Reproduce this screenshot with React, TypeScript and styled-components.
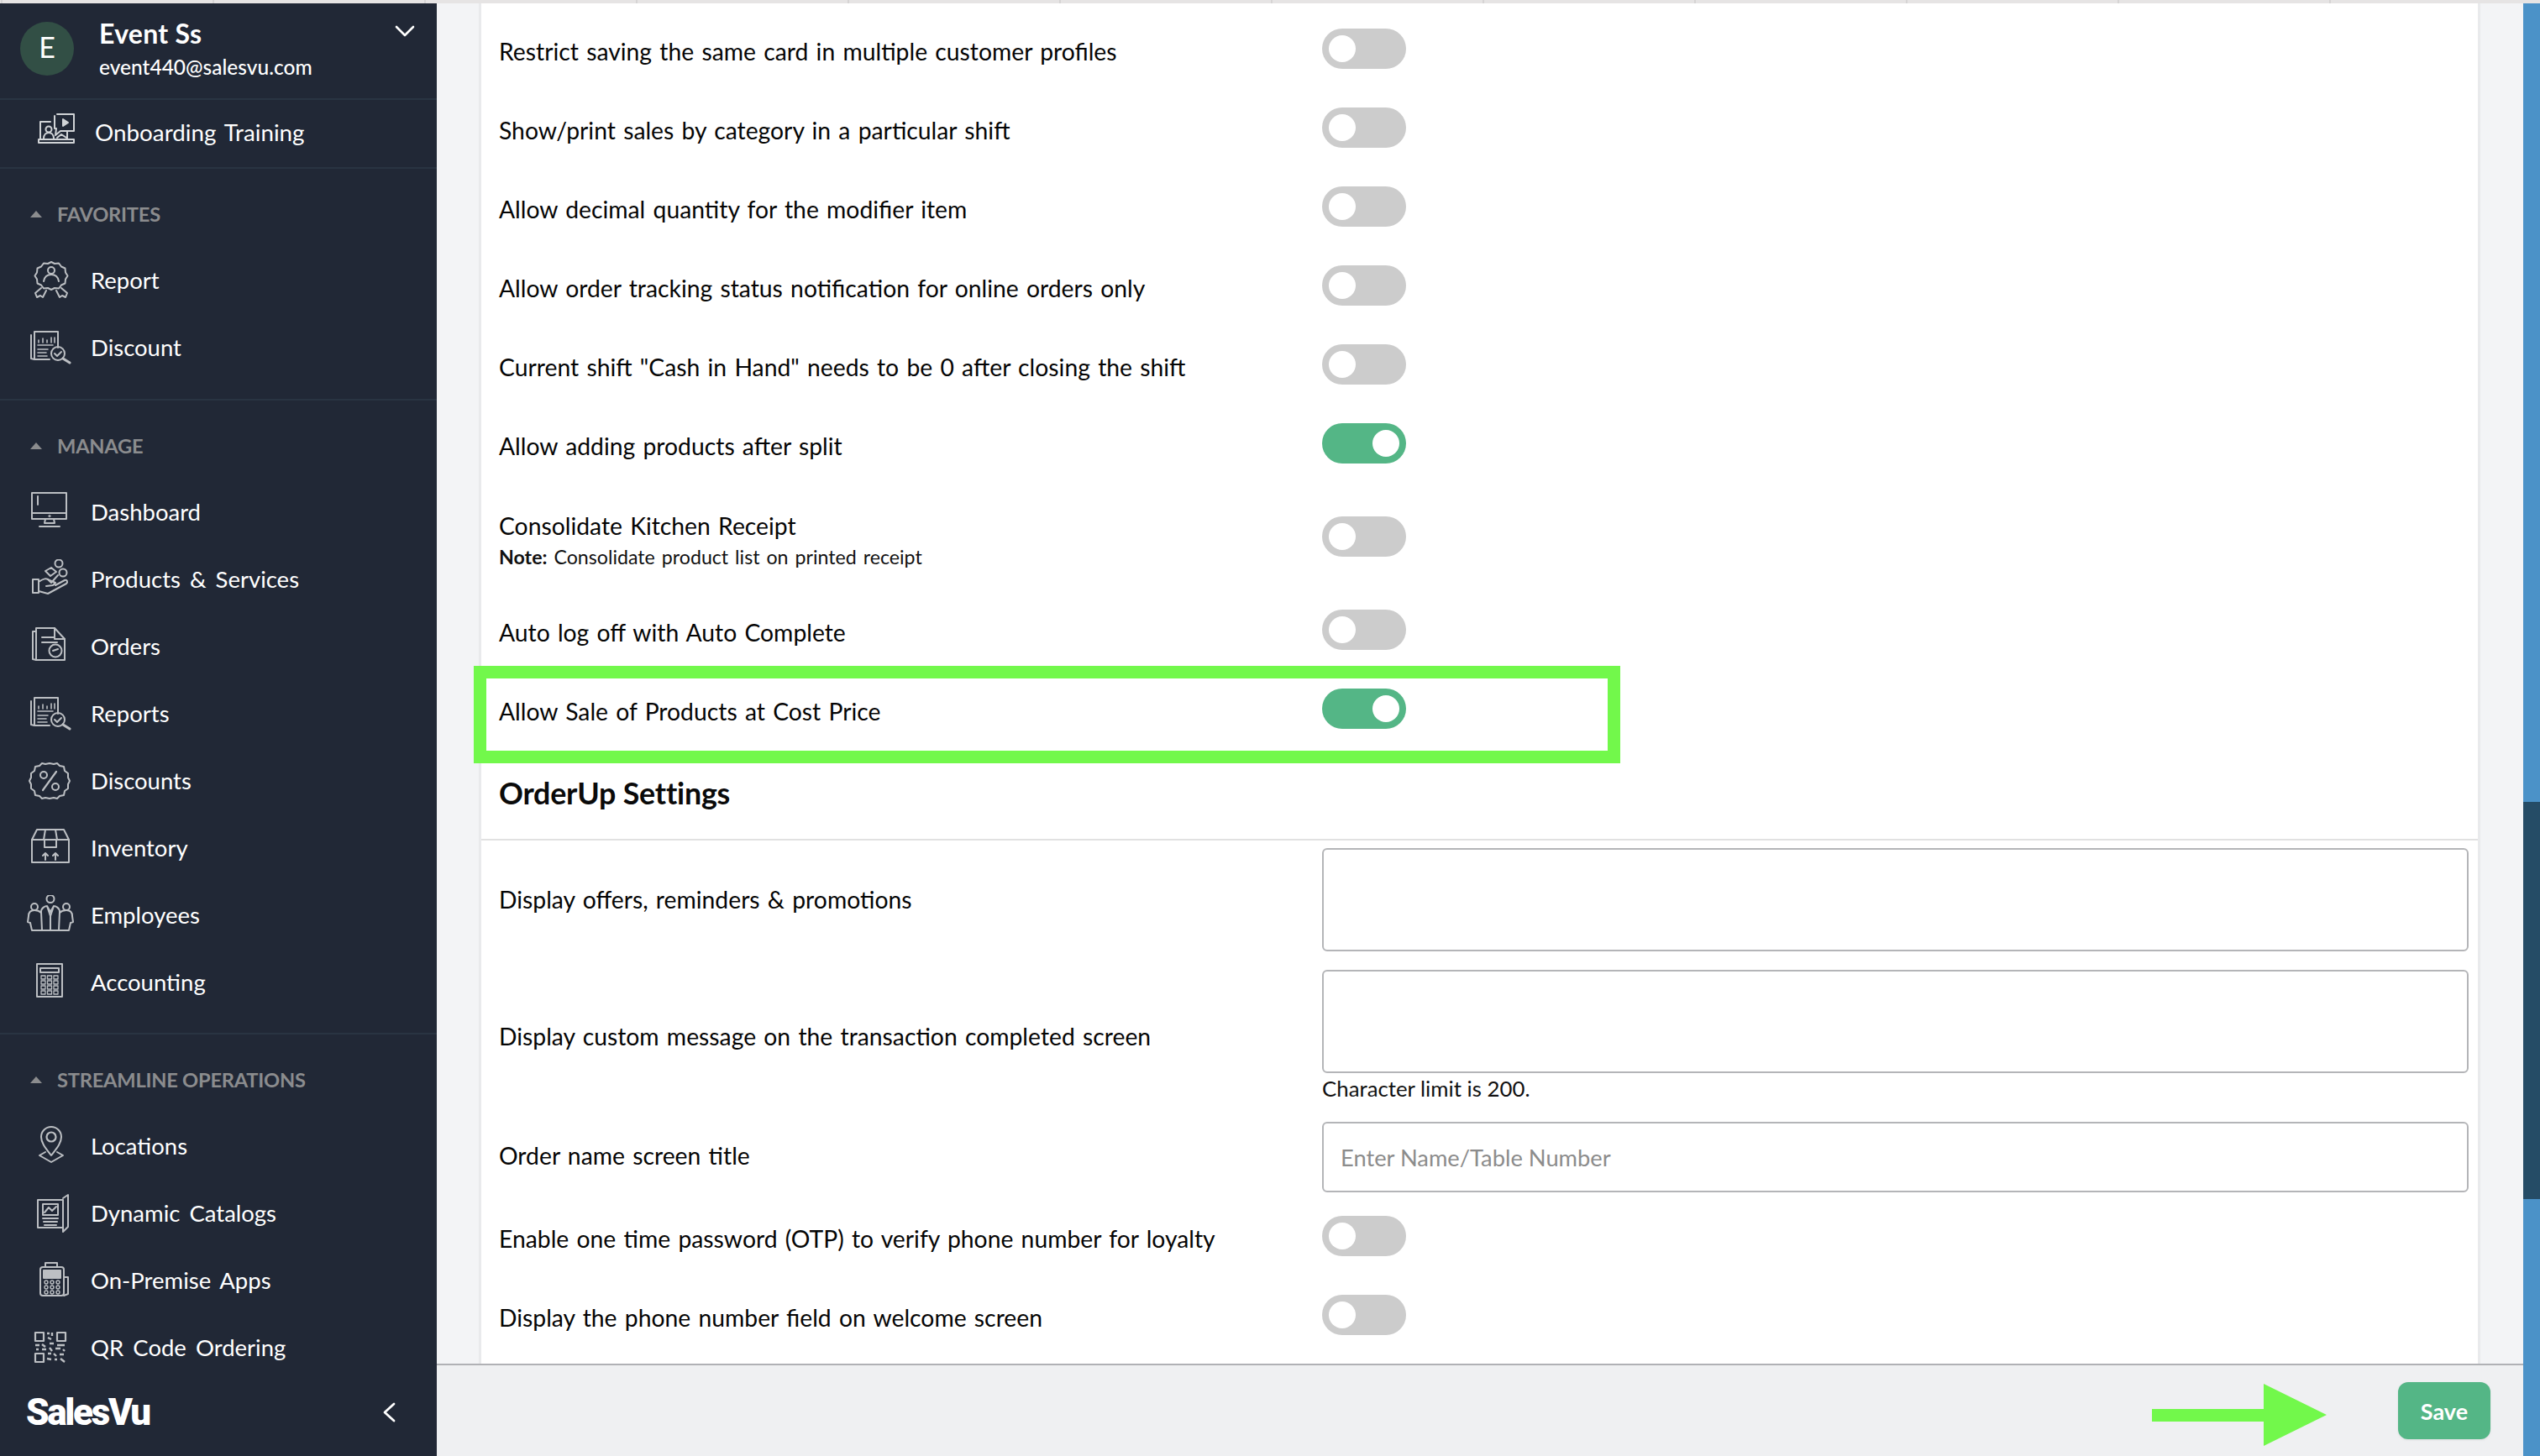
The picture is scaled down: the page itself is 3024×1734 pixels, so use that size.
import React from "react";
import styled, { createGlobalStyle } from "styled-components";

const Global = createGlobalStyle`
  html, body { margin: 0; padding: 0; background: #f3f4f6; }
  * { box-sizing: border-box; }
  body { font-family: "Lato", "Liberation Sans", sans-serif; overflow: hidden; }
`;

const Page = styled.div`
  width: 3024px; height: 1734px; display: flex; flex-direction: column; overflow: hidden; background: #f3f4f6;
`;
const TopStrip = styled.div`
  height: 4px; flex: none;
  background: repeating-linear-gradient(90deg, #e6e4e4 0 250px, #d6d4d4 250px 252px);
  background-position: 3px 0;
`;
const Body = styled.div`flex: 1; min-height: 0; display: flex;`;

const Sidebar = styled.aside`
  width: 520px; flex: none; background: #212836; display: flex; flex-direction: column; color: #fff;
`;
const Account = styled.div`
  height: 113px; flex: none; display: flex; padding: 22px 26px 0 24px; position: relative;
`;
const Avatar = styled.div`
  width: 64px; height: 64px; border-radius: 50%; background: #324f45; color: #fff; font-size: 34px; padding-bottom: 6px;
  display: flex; align-items: center; justify-content: center; flex: none;
`;
const AccountText = styled.div`
  margin-left: 30px; flex: 1; margin-top: -7px;
`;
const AccountName = styled.div`font-size: 32px; font-weight: 700; line-height: 41px; letter-spacing: .3px;`;
const AccountMail = styled.div`font-size: 24.5px; line-height: 40px; font-weight: 500;`;
const Chevron = styled.svg`width: 24px; height: 14px; margin-top: 4px; flex: none;`;
const Rule = styled.div`height: 2px; background: #293442; flex: none;`;
const OnboardRow = styled.div`
  height: 80px; flex: none; display: flex; align-items: center; padding-left: 28px; font-size: 27.8px; word-spacing: 3px;
  & > span { margin-left: 21px; padding-bottom: 3px; }
`;
const Scroll = styled.div`flex: 1; min-height: 0; overflow: hidden;`;
const Section = styled.section<{ $bottom: number }>`
  padding: 35px 0 ${(p) => p.$bottom}px;
  border-bottom: 2px solid #293442;
`;
const SectionHead = styled.div`
  height: 40px; display: flex; align-items: center; padding: 0 0 2px 36px; margin-bottom: 18px;
  color: #8b8c8e; font-size: 23.7px; font-weight: 700; letter-spacing: -.25px;
  & > svg { width: 14px; height: 8px; margin-right: 18px; }
`;
const Item = styled.div`
  height: 80px; display: flex; align-items: center; padding-left: 28px; font-size: 27.5px; word-spacing: 4px; color: #fff;
  & > span { margin-left: 16px; padding-bottom: 1px; }
`;
const Glyph = styled.svg`
  width: 64px; height: 48px; flex: none; fill: none; stroke: #bcbfc3; stroke-width: 2; stroke-linejoin: round; stroke-linecap: round;
`;
const BrandBar = styled.div`
  height: 104px; flex: none; display: flex; align-items: center; justify-content: space-between; background: #212836;
  padding: 0 49px 0 31px;
`;
const Brand = styled.div`font-family: "Roboto", sans-serif; font-weight: 900; font-size: 44px; letter-spacing: -2.3px; color: #fff;`;

const Right = styled.div`flex: 1; min-width: 0; display: flex; flex-direction: column;`;
const Main = styled.main`flex: 1; min-height: 0; padding: 0 54px 0 53px; overflow: hidden;`;
const Card = styled.div`
  height: 100%; background: #fff; padding-top: 7px; position: relative;
  box-shadow: -3px 0 0 #e9eaec, 3px 0 0 #e9eaec;
`;
const Row = styled.div<{ $h: number; $mb?: number }>`
  height: ${(p) => p.$h}px; margin-bottom: ${(p) => p.$mb ?? 0}px; display: grid; grid-template-columns: 980px 1fr; align-items: center; padding: 0 11px 0 21px;
  position: relative;
`;
const Label = styled.div<{ $pt?: number; $pb?: number }>`
  font-size: 28.3px; word-spacing: 2px; line-height: 38px; color: #050505;
  padding-top: ${(p) => p.$pt ?? 6}px; padding-bottom: ${(p) => p.$pb ?? 0}px;
`;
const Note = styled.div`font-size: 23.2px; line-height: 30px; margin-top: 3px; color: #111; & > b { font-weight: 700; }`;
const Toggle = styled.div<{ $on?: boolean }>`
  width: 100px; height: 48px; border-radius: 24px; padding: 8px; display: flex;
  justify-content: ${(p) => (p.$on ? "flex-end" : "flex-start")};
  background: ${(p) => (p.$on ? "#54b686" : "#cccccc")};
  &::after { content: ""; width: 32px; height: 32px; border-radius: 50%; background: #fff; }
`;
const Highlight = styled.div`
  position: absolute; left: -9px; top: -4px; width: 1365px; height: 116px; border: 15px solid #72f84b; pointer-events: none;
`;
const Heading = styled.h2`
  margin: 0; height: 108px; padding: 30px 21px 0; font-size: 35.8px; line-height: 48px; font-weight: 700; color: #0a0a0a;
  letter-spacing: -.2px;
`;
const Divider = styled.div`height: 2px; background: #e1e1e1; margin-bottom: 9px;`;
const FieldStack = styled.div`display: flex; flex-direction: column; align-self: start;`;
const Area = styled.textarea`
  width: 100%; height: 123px; display: block; border: 2px solid #b4b5b8; border-radius: 6px; background: #fff; resize: none; outline: none;
`;
const Hint = styled.div`font-size: 25.8px; line-height: 36px; color: #111; height: 37px;`;
const TextInput = styled.input`
  width: 100%; height: 84px; border: 2px solid #b4b5b8; border-radius: 6px; padding: 0 20px; outline: none;
  font: 400 27.3px "Lato", sans-serif; color: #222;
  &::placeholder { color: #8c8c8c; opacity: 1; }
`;

const Footer = styled.footer`
  height: 110px; flex: none; background: #eff0f2; border-top: 2px solid #b0b1b5; display: flex; align-items: center; justify-content: flex-end;
  padding-right: 39px;
`;
const Arrow = styled.svg`width: 208px; height: 74px; margin: 10px 85px 0 0; flex: none;`;
const SaveButton = styled.button`
  width: 110px; height: 68px; border: 0; border-radius: 12px; background: #54b686; color: #fff; font: 700 27px "Lato", sans-serif;
  box-shadow: 0 1px 3px rgba(0,0,0,.08);
`;
const ScrollTrack = styled.div`width: 20px; flex: none; background: #4b92c8; display: flex; flex-direction: column;`;
const ScrollThumb = styled.div`height: 473px; margin-top: 951px; background: #254c66;`;

const Dn = () => <Chevron viewBox="0 0 24 14" fill="none" stroke="#fff" strokeWidth="2.6" strokeLinecap="round" strokeLinejoin="round"><path d="M2 2l10 10L22 2" /></Chevron>;
const Caret = () => <svg viewBox="0 0 14 8"><path d="M7 0l7 8H0z" fill="#8b8c8e" /></svg>;

const IAward = () => <Glyph viewBox="0 0 64 48">
  <path d="M33 2l4 2 5-.5 3 4 4.5 2 .5 5 2.5 4-2.5 4-.5 5-4.5 2-3 4-5-.5-4 2-4-2-5 .5-3-4-4.5-2-.5-5-2.5-4 2.5-4 .5-5 4.5-2 3-4 5 .5z" />
  <circle cx="33" cy="12" r="4" /><path d="M24 25c1-6 5-8 9-8s8 2 9 8" />
  <path d="M21 33l-7 6 2 5 4-2 3 2 4-8M45 33l7 6-2 5-4-2-3 2-4-8" />
</Glyph>;
const INews = () => <Glyph viewBox="0 0 64 48">
  <path d="M9 9v28l4 1M13 38V5h28v19M13 38h18" />
  <path d="M18 18v-3M23 18v-5M28 18v-3M33 18v-6M37 18v-6M17 21h18M17 26h12M17 30h10M17 34h11" strokeWidth="1.6" />
  <circle cx="41" cy="31" r="8" /><path d="M37 31l3 3 5-5" /><path d="M47 37l8 5" strokeWidth="3.2" />
</Glyph>;
const IMonitor = () => <Glyph viewBox="0 0 64 48">
  <rect x="10" y="1" width="41" height="31" /><path d="M10 25h41M17 5v10M26 32l-1 5h12l-1-5M19 41h24" /><circle cx="31" cy="28.5" r=".6" />
</Glyph>;
const IHand = () => <Glyph viewBox="0 0 64 48">
  <rect x="11" y="24" width="7" height="16" /><path d="M18 27c6-4 9-5 13-2l7 3-3 3-8 1M18 38l11 3 22-12c2-2 1-5-2-4l-11 6" />
  <path d="M26 14l7-4 6 5-7 5z" /><circle cx="42" cy="5" r="4.5" /><circle cx="47" cy="16" r="4.5" /><path d="M29 24l4 4 8-9" />
</Glyph>;
const IOrder = () => <Glyph viewBox="0 0 64 48">
  <path d="M15 6h-4v33l4 1" /><path d="M15 2h22l12 13v25H15z" /><path d="M37 2v13h12M22 13h14M22 19h18" />
  <circle cx="38" cy="29" r="7.5" /><path d="M35 29l6-2" />
</Glyph>;
const IPercent = () => <Glyph viewBox="0 0 64 48">
  <path d="M31 3l5 1 4-1 3 3 5 1 1 5 4 3v5l2 4-2 4v5l-4 3-1 5-5 1-3 3-4-1-5 1-5-1-4 1-3-3-5-1-1-5-4-3v-5l-2-4 2-4v-5l4-3 1-5 5-1 3-3 4 1z" />
  <circle cx="24" cy="17" r="4" /><circle cx="38" cy="31" r="4" /><path d="M39 13L23 35" strokeWidth="2.2" />
</Glyph>;
const IBox = () => <Glyph viewBox="0 0 64 48">
  <rect x="10" y="14" width="44" height="27" /><path d="M10 14l6-12h32l6 12M24 14l2-12M40 14l-2-12M25 14v9h14v-9" />
  <path d="M26 38v-8M23 33l3-3 3 3M38 38v-8M35 33l3-3 3 3" />
</Glyph>;
const IPeople = () => <Glyph viewBox="0 0 64 48">
  <circle cx="32" cy="4.5" r="4.5" /><circle cx="13" cy="14" r="4" /><circle cx="51" cy="14" r="4" />
  <path d="M22 42l-1-22c0-5 5-7 7-7l4 7 4-7c2 0 7 2 7 7l-1 22zM28 13l4 12 4-12M32 25v17" />
  <path d="M21 21c-2-2-5-3-8-3-5 0-7 3-7 7l-1 7 3 1 2 9h12M43 21c2-2 5-3 8-3 5 0 7 3 7 7l1 7-3 1-2 9H42" />
</Glyph>;
const ICalc = () => <Glyph viewBox="0 0 64 48">
  <rect x="16" y="2" width="30" height="39" /><rect x="20" y="7" width="22" height="5" />
  {[0, 1, 2].map((c) => [0, 1, 2, 3].map((r) => <rect key={`${c}${r}`} x={21 + c * 7.5} y={16 + r * 6} width="5" height="4" strokeWidth="1.3" />))}
</Glyph>;
const IPin = () => <Glyph viewBox="0 0 64 48">
  <path d="M33 35C26 26 21 20 21 13a12 12 0 0 1 24 0c0 7-5 13-12 22z" /><circle cx="33" cy="13" r="5.5" strokeWidth="2.2" />
  <path d="M26 31l-7 4 14 8 14-8-7-4" />
</Glyph>;
const IBook = () => <Glyph viewBox="0 0 64 48">
  <path d="M17 8l30 0 0 33-30 0z" /><path d="M47 6l6-4v38l-6 6v-5" /><rect x="23" y="13" width="18" height="13" />
  <path d="M25 23l5-6 4 4 5-5M23 30h18M24 34h16M25 38h14" />
</Glyph>;
const IPos = () => <Glyph viewBox="0 0 64 48">
  <path d="M26 8V3h14v5" /><rect x="20" y="8" width="28" height="34" rx="3" /><rect x="24" y="12" width="20" height="9" fill="#bcbfc3" />
  <path d="M48 20h5v20l-5 2" />
  {[0, 1, 2].map((c) => [0, 1, 2].map((r) => <circle key={`${c}${r}`} cx={27 + c * 7} cy={26 + r * 6} r="2" strokeWidth="1.4" />))}
</Glyph>;
const IQr = () => <Glyph viewBox="0 0 64 48">
  <g strokeWidth="2.2"><rect x="14" y="6" width="10" height="10" /><rect x="40" y="6" width="10" height="10" /><rect x="14" y="31" width="10" height="10" /></g>
  <path d="M28 7h3M34 6v4M29 12l4 2M14 21h5M22 20l4 3M31 19h5M40 21h9M15 26h3M22 26h5M31 24l3 4M38 25h6M47 26l2 2M29 31h4M36 31l3 3M43 32h5M28 37l5 1M37 38h3M44 37l5 4" strokeWidth="2.4" strokeLinecap="butt" />
</Glyph>;
const IVideo = () => <Glyph viewBox="0 0 64 48" style={{ stroke: "#d0d3d6" }}>
  <path d="M20 31V10h12M52 22v9M18 31h42v4H18z" />
  <path d="M40 1h20v20H44l-6 5 1-8h-2V3" /><path d="M47 7l6 4-6 4z" fill="#d0d3d6" />
  <circle cx="30" cy="19" r="3.5" /><path d="M24 30c0-5 3-7 6-7s6 2 6 7" /><path d="M40 29l5-4 6 4" />
</Glyph>;

const groups = [
  { title: "FAVORITES", bottom: 21, items: [["Report", IAward], ["Discount", INews]] },
  { title: "MANAGE", bottom: 20, items: [["Dashboard", IMonitor], ["Products & Services", IHand], ["Orders", IOrder], ["Reports", INews], ["Discounts", IPercent], ["Inventory", IBox], ["Employees", IPeople], ["Accounting", ICalc]] },
  { title: "STREAMLINE OPERATIONS", bottom: 20, items: [["Locations", IPin], ["Dynamic Catalogs", IBook], ["On-Premise Apps", IPos], ["QR Code Ordering", IQr]] },
] as const;

const toggles: [string, boolean][] = [
  ["Restrict saving the same card in multiple customer profiles", false],
  ["Show/print sales by category in a particular shift", false],
  ["Allow decimal quantity for the modifier item", false],
  ["Allow order tracking status notification for online orders only", false],
  ["Current shift \"Cash in Hand\" needs to be 0 after closing the shift", false],
  ["Allow adding products after split", true],
];

export default function App() {
  return (
    <Page>
      <Global />
      <TopStrip />
      <Body>
        <Sidebar>
          <Account>
            <Avatar>E</Avatar>
            <AccountText>
              <AccountName>Event Ss</AccountName>
              <AccountMail>event440@salesvu.com</AccountMail>
            </AccountText>
            <Dn />
          </Account>
          <Rule />
          <OnboardRow><IVideo /><span>Onboarding Training</span></OnboardRow>
          <Rule />
          <Scroll>
            {groups.map((g) => (
              <Section key={g.title} $bottom={g.bottom}>
                <SectionHead><Caret />{g.title}</SectionHead>
                {g.items.map(([name, Icon]) => (
                  <Item key={name}><Icon /><span>{name}</span></Item>
                ))}
              </Section>
            ))}
          </Scroll>
          <BrandBar>
            <Brand>SalesVu</Brand>
            <svg width="16" height="24" viewBox="0 0 16 24" fill="none" stroke="#fff" strokeWidth="2.8" strokeLinecap="round" strokeLinejoin="round"><path d="M14 2L3 12l11 10" /></svg>
          </BrandBar>
        </Sidebar>
        <Right>
          <Main>
            <Card>
              {toggles.map(([t, on]) => (
                <Row key={t} $h={94}><Label>{t}</Label><Toggle $on={on} /></Row>
              ))}
              <Row $h={128}>
                <Label>Consolidate Kitchen Receipt<Note><b>Note:</b> Consolidate product list on printed receipt</Note></Label>
                <Toggle />
              </Row>
              <Row $h={94}><Label>Auto log off with Auto Complete</Label><Toggle /></Row>
              <Row $h={94}>
                <Label>Allow Sale of Products at Cost Price</Label><Toggle $on />
                <Highlight />
              </Row>
              <Heading>OrderUp Settings</Heading>
              <Divider />
              <Row $h={123} $mb={22}><Label $pt={0} $pb={2}>Display offers, reminders &amp; promotions</Label><FieldStack><Area /></FieldStack></Row>
              <Row $h={160} $mb={21}><Label $pt={0} $pb={2}>Display custom message on the transaction completed screen</Label><FieldStack><Area /><Hint>Character limit is 200.</Hint></FieldStack></Row>
              <Row $h={84} $mb={5}><Label $pt={0} $pb={5}>Order name screen title</Label><TextInput placeholder="Enter Name/Table Number" /></Row>
              <Row $h={94}><Label>Enable one time password (OTP) to verify phone number for loyalty</Label><Toggle /></Row>
              <Row $h={94}><Label>Display the phone number field on welcome screen</Label><Toggle /></Row>
            </Card>
          </Main>
          <Footer>
            <Arrow viewBox="0 0 208 74"><path d="M0 30h133V0l75 37-75 37V45H0z" fill="#72f84b" /></Arrow>
            <SaveButton>Save</SaveButton>
          </Footer>
        </Right>
        <ScrollTrack><ScrollThumb /></ScrollTrack>
      </Body>
    </Page>
  );
}
